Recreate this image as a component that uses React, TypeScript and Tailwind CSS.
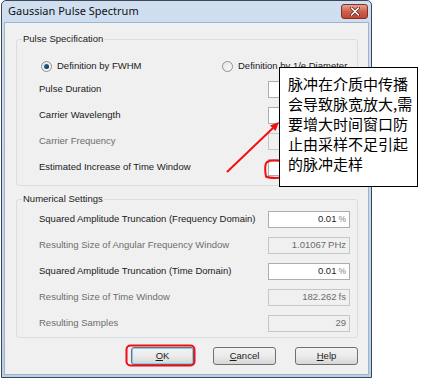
import React from 'react';
import clsx from 'clsx';

// Windows 7 style dialog with an annotation callout laid over it

const Field: React.FC<{ value?: string; unit?: string; disabled?: boolean }> = ({ value, unit, disabled }) => (
  <div
    className={clsx(
      'w-[82px] h-[17px] border flex items-center justify-end pr-[3px] text-[9.5px] leading-none',
      disabled ? 'bg-[#f0f0f0] border-[#c6c6c6] text-[#6d6d6d]' : 'bg-white border-[#abadb3] text-[#1e1e1e]'
    )}
  >
    {value && <span>{value}</span>}
    {unit && <span className={clsx('ml-[2px]', disabled ? '' : 'text-[#808080] text-[8.5px]')}>{unit}</span>}
  </div>
);

const Row: React.FC<{ label: string; disabled?: boolean; children: React.ReactNode }> = ({ label, disabled, children }) => (
  <div className="h-[26px] flex items-center justify-between">
    <span className={clsx('text-[9.5px]', disabled ? 'text-[#6d6d6d]' : 'text-[#1a1a1a]')}>{label}</span>
    {children}
  </div>
);

const Radio: React.FC<{ checked?: boolean; label: string }> = ({ checked, label }) => (
  <div className="flex items-center gap-[5px]">
    <div className="w-[11px] h-[11px] rounded-full border border-[#8e8f8f] bg-gradient-to-br from-[#e6e6e6] to-[#f8f8f8] flex items-center justify-center">
      {checked && <div className="w-[5px] h-[5px] rounded-full bg-gradient-to-br from-[#2e6fae] to-[#0d2e52]" />}
    </div>
    <span className="text-[9.5px] text-[#1a1a1a] whitespace-nowrap">{label}</span>
  </div>
);

const DlgButton: React.FC<{ text: string; def?: boolean }> = ({ text, def }) => (
  <button
    className={clsx(
      'w-[63px] h-[18px] rounded-[3px] border border-[#707070] bg-gradient-to-b from-[#f3f3f3] via-[#ebebeb] to-[#d7d7d7] text-[9.5px] text-[#1a1a1a] flex items-center justify-center',
      def && 'shadow-[inset_0_0_0_1px_#7ed0f2]'
    )}
  >
    <span className="underline">{text[0]}</span>
    {text.slice(1)}
  </button>
);

const App: React.FC = () => {
  return (
    <div className="w-[426px] h-[379px] bg-white relative overflow-hidden font-['Liberation_Sans',Arial,sans-serif]">
      {/* Dialog window */}
      <div className="ml-[1px] w-[371px] h-[378px] border border-[#3e4853] rounded-t-[5px] bg-gradient-to-b from-[#cfdff1] to-[#b9d0ea] flex flex-col">
        <div className="h-[21px] flex items-center justify-between pl-[6px] pr-[3px]">
          <span className="text-[11px] text-[#111] font-['Noto_Sans',sans-serif]">Gaussian Pulse Spectrum</span>
          <div className="w-[27px] h-[15px] rounded-[3px] border border-[#7d3229] bg-gradient-to-b from-[#e2a394] via-[#cf5f4c] to-[#c4442f] flex items-center justify-center">
            <svg width="10" height="9" viewBox="0 0 10 9">
              <path d="M1.5 1 L8.5 8 M8.5 1 L1.5 8" stroke="#5a2018" strokeWidth="3" strokeLinecap="round" />
              <path d="M1.5 1 L8.5 8 M8.5 1 L1.5 8" stroke="#ffffff" strokeWidth="1.6" strokeLinecap="round" />
            </svg>
          </div>
        </div>

        <div className="flex-1 mx-[2px] mb-[2px] border border-[#9fb4ca] bg-[#f0f0f0] flex flex-col pl-[11px] pr-[10px]">
          {/* Pulse Specification */}
          <fieldset className="mt-[10px] border border-[#d5dfe5] rounded-[3px]">
            <legend className="ml-[5px] px-[1px] text-[9.5px] leading-[12px] text-[#1a1a1a]">Pulse Specification</legend>
            <div className="pl-[22px] pr-[7px] pt-[11px] pb-[5px]">
              <div className="h-[20px] flex items-center pl-[2px]">
                <div className="w-[181px]">
                  <Radio checked label="Definition by FWHM" />
                </div>
                <Radio label="Definition by 1/e Diameter" />
              </div>
              <Row label="Pulse Duration">
                <Field />
              </Row>
              <Row label="Carrier Wavelength">
                <Field />
              </Row>
              <Row label="Carrier Frequency" disabled>
                <Field disabled />
              </Row>
              <Row label="Estimated Increase of Time Window">
                <Field />
              </Row>
            </div>
          </fieldset>

          {/* Numerical Settings */}
          <fieldset className="mt-[7px] border border-[#d5dfe5] rounded-[3px]">
            <legend className="ml-[5px] px-[1px] text-[9.5px] leading-[12px] text-[#1a1a1a]">Numerical Settings</legend>
            <div className="pl-[22px] pr-[7px] pt-[1px] pb-[1px]">
              <Row label="Squared Amplitude Truncation (Frequency Domain)">
                <Field value="0.01" unit="%" />
              </Row>
              <Row label="Resulting Size of Angular Frequency Window" disabled>
                <Field value="1.01067" unit="PHz" disabled />
              </Row>
              <Row label="Squared Amplitude Truncation (Time Domain)">
                <Field value="0.01" unit="%" />
              </Row>
              <Row label="Resulting Size of Time Window" disabled>
                <Field value="182.262" unit="fs" disabled />
              </Row>
              <Row label="Resulting Samples" disabled>
                <Field value="29" disabled />
              </Row>
            </div>
          </fieldset>

          <div className="mt-[9px] flex justify-end gap-[19px]">
            <DlgButton text="OK" def />
            <DlgButton text="Cancel" />
            <DlgButton text="Help" />
          </div>
        </div>
      </div>

      {/* red annotation marks */}
      <svg className="absolute left-0 top-0 pointer-events-none" width="426" height="379" viewBox="0 0 426 379">
        <line x1="227" y1="172" x2="273" y2="128" stroke="#f01010" strokeWidth="2" />
        <polygon points="279,122 275.5,131 270,125.5" fill="#f01010" />
        <path d="M284 161.5 C278 160.5 270 160.5 267 162 C264.5 164 265 172 266 176.5 C270 178.5 278 178 284 177.5" fill="none" stroke="#f01010" strokeWidth="2" />
        <rect x="126.5" y="345.5" width="68" height="20" rx="4" fill="none" stroke="#e8101a" strokeWidth="2" />
      </svg>

      {/* callout */}
      <div className="absolute left-[279px] top-[67px] w-[139px] h-[120px] bg-white border border-black pl-[8px] pt-[6px] text-[15px] leading-[20px] text-black font-['Noto_Sans_CJK_SC',sans-serif]">
        脉冲在介质中传播会导致脉宽放大,需要增大时间窗口防止由采样不足引起的脉冲走样
      </div>
    </div>
  );
};

export default App;
